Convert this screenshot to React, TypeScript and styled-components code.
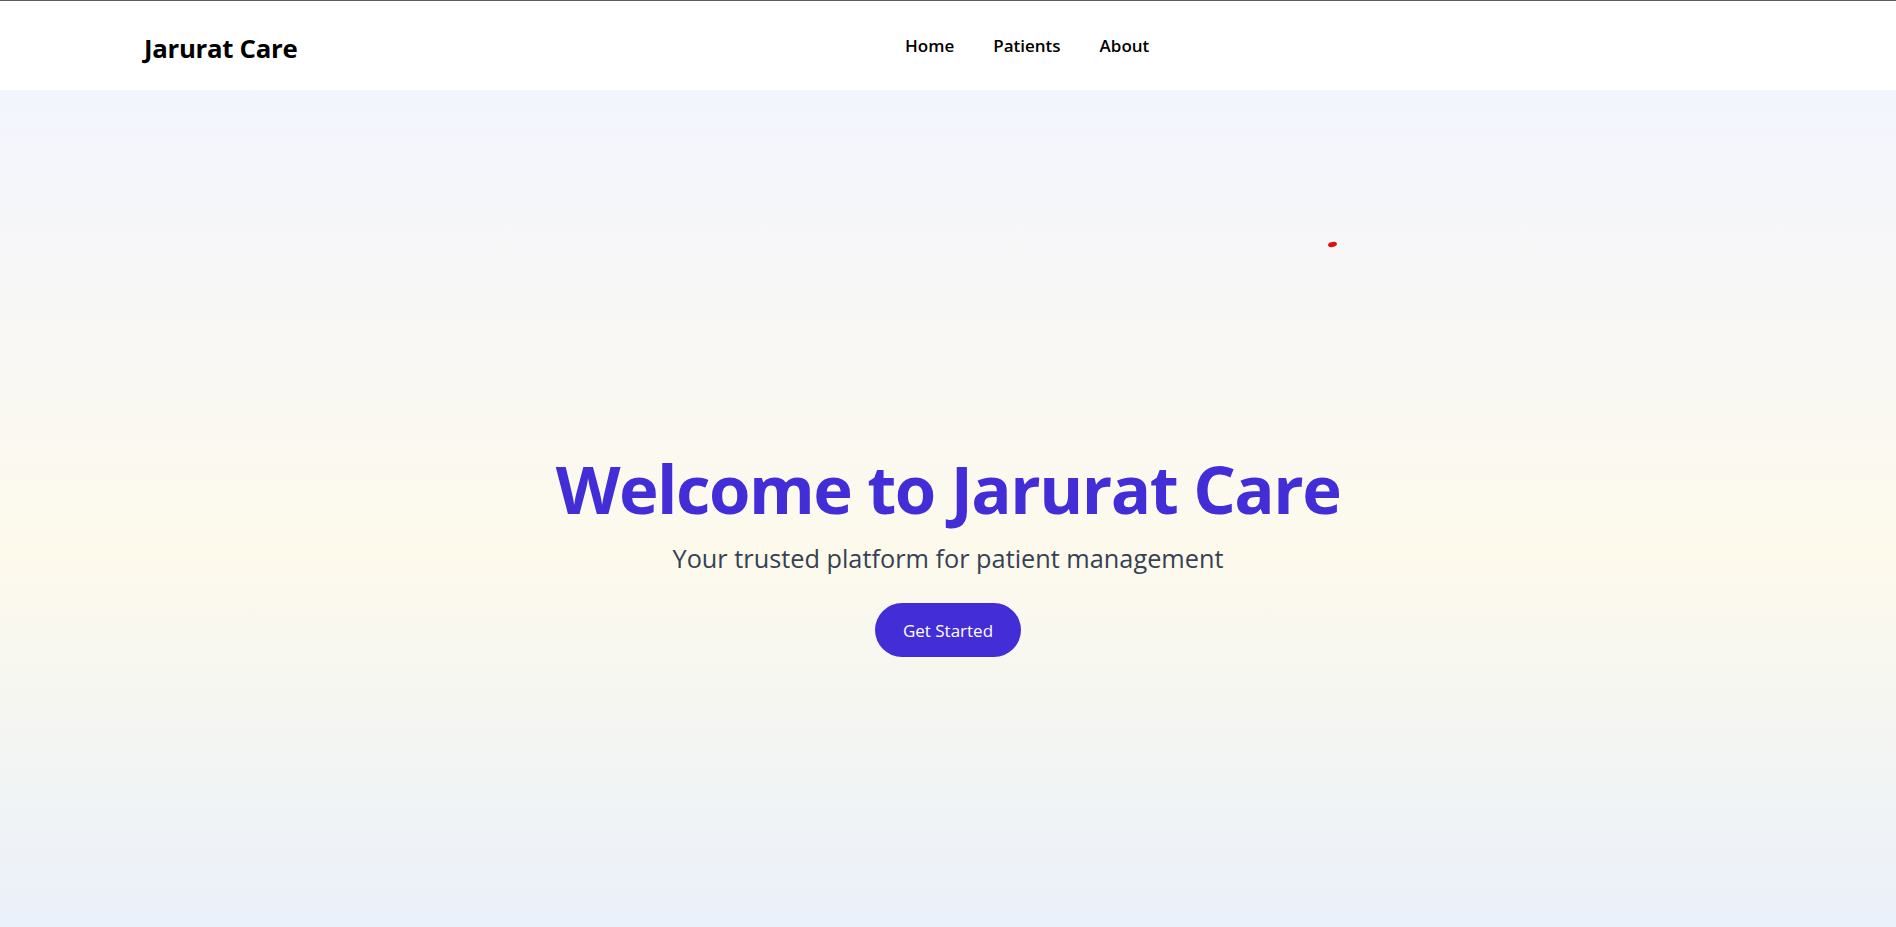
import React from 'react';
import styled, { createGlobalStyle } from 'styled-components';

const GlobalStyle = createGlobalStyle`
  *, *::before, *::after { box-sizing: border-box; }
  html, body { margin: 0; padding: 0; }
  body {
    font-family: "Open Sans", "Noto Sans", sans-serif;
    background: #ffffff;
    color: #000000;
    overflow: hidden;
  }
`;

const Header = styled.header`
  height: 90px;
  border-top: 1px solid #5c5c5c;
  background: #ffffff;
  display: flex;
  align-items: center;
  justify-content: space-between;
  padding: 0 139px 0 144px;
`;

const Logo = styled.div`
  font-size: 25.8px;
  font-weight: 700;
  letter-spacing: -0.3px;
  color: #000000;
  padding-top: 4px;
`;

const Nav = styled.nav`
  display: flex;
  align-items: center;
  gap: 39px;
`;

const NavLink = styled.a`
  font-size: 17px;
  font-weight: 600;
  color: #000000;
  text-decoration: none;
  cursor: pointer;
`;

const Spacer = styled.span`
  width: 0;
`;

const Hero = styled.main`
  position: relative;
  min-height: 100vh;
  display: flex;
  flex-direction: column;
  align-items: center;
  justify-content: center;
  text-align: center;
  background: linear-gradient(to bottom, #f3f5fe 0%, #fdfaec 50%, #e6eefd 100%);
`;

const Title = styled.h1`
  margin: 0;
  font-size: 67px;
  line-height: 1.15;
  font-weight: 700;
  letter-spacing: -1.5px;
  color: #432dd7;
`;

const Subtitle = styled.p`
  margin: 14px 0 0;
  font-size: 25.3px;
  line-height: 1.4;
  color: #364153;
`;

const CTA = styled.button`
  margin-top: 27px;
  height: 54px;
  padding: 0 28px;
  border: none;
  border-radius: 999px;
  background: #432dd7;
  color: #ffffff;
  font-family: inherit;
  font-size: 17px;
  cursor: pointer;
`;

const Dot = styled.span`
  position: absolute;
  left: 1328px;
  top: 152px;
  width: 9px;
  height: 5px;
  border-radius: 50%;
  background: #e01010;
  transform: rotate(-12deg);
`;

export default function App() {
  return (
    <>
      <GlobalStyle />
      <Header>
        <Logo>Jarurat Care</Logo>
        <Nav>
          <NavLink>Home</NavLink>
          <NavLink>Patients</NavLink>
          <NavLink>About</NavLink>
        </Nav>
        <Spacer />
      </Header>
      <Hero>
        <Dot />
        <Title>Welcome to Jarurat Care</Title>
        <Subtitle>Your trusted platform for patient management</Subtitle>
        <CTA>Get Started</CTA>
      </Hero>
    </>
  );
}
